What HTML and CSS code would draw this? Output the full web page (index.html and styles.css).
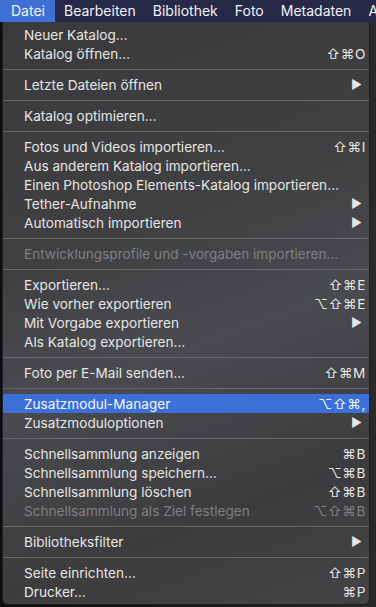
FILE: index.html
```html
<!DOCTYPE html>
<html lang="de">
<head>
  <meta charset="UTF-8" />
  <meta name="viewport" content="width=device-width, initial-scale=1.0"/>
  <title>Datei-Menü</title>
  <link rel="stylesheet" href="styles.css">
</head>
<body>

  <!-- MENU BAR -->
  <div class="menubar">
    <span class="menu-title active">Datei</span>
    <span class="menu-title">Bearbeiten</span>
    <span class="menu-title">Bibliothek</span>
    <span class="menu-title">Foto</span>
    <span class="menu-title">Metadaten</span>
    <span class="menu-title">A</span>
  </div>

  <!-- DROPDOWN -->
  <div class="dropdown">
    <div class="item"><span>Neuer Katalog…</span></div>
    <div class="item"><span>Katalog öffnen…</span><span class="key">⇧⌘O</span></div>
    <div class="sep"></div>
    <div class="item"><span>Letzte Dateien öffnen</span><span class="arrow">▶</span></div>
    <div class="sep"></div>
    <div class="item"><span>Katalog optimieren…</span></div>
    <div class="sep"></div>
    <div class="item"><span>Fotos und Videos importieren…</span><span class="key">⇧⌘I</span></div>
    <div class="item"><span>Aus anderem Katalog importieren…</span></div>
    <div class="item"><span>Einen Photoshop Elements-Katalog importieren…</span></div>
    <div class="item"><span>Tether-Aufnahme</span><span class="arrow">▶</span></div>
    <div class="item"><span>Automatisch importieren</span><span class="arrow">▶</span></div>
    <div class="sep"></div>
    <div class="item disabled"><span>Entwicklungsprofile und -vorgaben importieren…</span></div>
    <div class="sep"></div>
    <div class="item"><span>Exportieren…</span><span class="key">⇧⌘E</span></div>
    <div class="item"><span>Wie vorher exportieren</span><span class="key">⌥⇧⌘E</span></div>
    <div class="item"><span>Mit Vorgabe exportieren</span><span class="arrow">▶</span></div>
    <div class="item"><span>Als Katalog exportieren…</span></div>
    <div class="sep"></div>
    <div class="item"><span>Foto per E-Mail senden…</span><span class="key">⇧⌘M</span></div>
    <div class="sep"></div>
    <div class="item selected"><span>Zusatzmodul-Manager</span><span class="key">⌥⇧⌘,</span></div>
    <div class="item"><span>Zusatzmoduloptionen</span><span class="arrow">▶</span></div>
    <div class="sep"></div>
    <div class="item"><span>Schnellsammlung anzeigen</span><span class="key">⌘B</span></div>
    <div class="item"><span>Schnellsammlung speichern…</span><span class="key">⌥⌘B</span></div>
    <div class="item"><span>Schnellsammlung löschen</span><span class="key">⇧⌘B</span></div>
    <div class="item disabled"><span>Schnellsammlung als Ziel festlegen</span><span class="key">⌥⇧⌘B</span></div>
    <div class="sep"></div>
    <div class="item"><span>Bibliotheksfilter</span><span class="arrow">▶</span></div>
    <div class="sep"></div>
    <div class="item"><span>Seite einrichten…</span><span class="key">⇧⌘P</span></div>
    <div class="item"><span>Drucker…</span><span class="key">⌘P</span></div>
  </div>

</body>
</html>
```

FILE: styles.css
```css
* {
  margin: 0;
  padding: 0;
  box-sizing: border-box;
}

html, body {
  height: 100%;
  overflow: hidden;
}

body {
  font-family: Inter, "Noto Sans", "DejaVu Sans", sans-serif;
  background: linear-gradient(90deg, #0d0d0f 0%, #1a1a1c 60%, #2a2a2c 100%);
  color: #e6e6e6;
}

/* Menu bar */
.menubar {
  height: 22px;
  background: #262948;
  display: flex;
  align-items: center;
  white-space: nowrap;
  overflow: hidden;
  font-size: 14px;
  color: #f2f2f4;
}

.menu-title {
  flex-shrink: 0;
  height: 22px;
  line-height: 22px;
  padding: 0 8px 0 9px;
}

.menu-title:first-child {
  padding: 0 10px 0 11px;
}

.menu-title.active {
  background: #3d6fd5;
}

/* Dropdown */
.dropdown {
  width: 368px;
  margin-left: 2px;
  padding: 3px 0;
  background: linear-gradient(160deg, #3a3a3c 0%, #404042 35%, #4a4b4f 55%, #3c3c3e 80%, #444446 100%);
  border-radius: 0 0 6px 6px;
  border: 1px solid #202022;
  border-top: none;
  font-size: 13.6px;
}

.item {
  height: 19px;
  display: flex;
  align-items: center;
  justify-content: space-between;
  padding: 0 3px 0 21px;
  white-space: nowrap;
}

.item.selected {
  background: #3c6fd8;
  color: #f4f6fb;
}

.item.disabled {
  color: #7e7f83;
}

.key {
  letter-spacing: 0.6px;
}

.arrow {
  font-size: 12px;
  margin-right: 4px;
}

.sep {
  height: 12px;
  display: flex;
  align-items: center;
}

.sep::before {
  content: "";
  flex: 1;
  height: 1px;
  background: #67676b;
}
```
